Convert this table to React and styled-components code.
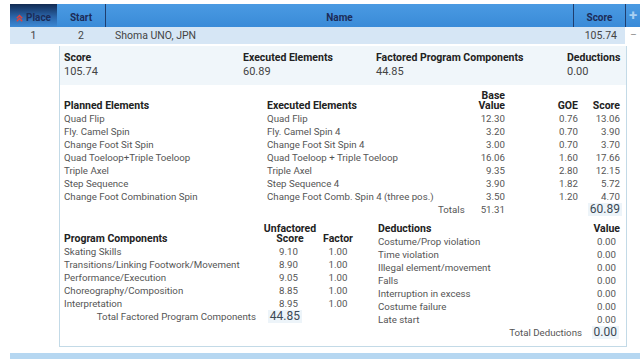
import React from "react"
import styled, { createGlobalStyle } from "styled-components"

const GlobalStyle = createGlobalStyle`
  body {
    margin: 0;
    background: #fff;
    font-family: Roboto, "Liberation Sans", sans-serif;
    color: #555;
  }
`

const summary = [
  { label: "Score", value: "105.74" },
  { label: "Executed Elements", value: "60.89" },
  { label: "Factored Program Components", value: "44.85" },
  { label: "Deductions", value: "0.00" },
]

const elements = [
  ["Quad Flip", "Quad Flip", "12.30", "0.76", "13.06"],
  ["Fly. Camel Spin", "Fly. Camel Spin 4", "3.20", "0.70", "3.90"],
  ["Change Foot Sit Spin", "Change Foot Sit Spin 4", "3.00", "0.70", "3.70"],
  ["Quad Toeloop+Triple Toeloop", "Quad Toeloop + Triple Toeloop", "16.06", "1.60", "17.66"],
  ["Triple Axel", "Triple Axel", "9.35", "2.80", "12.15"],
  ["Step Sequence", "Step Sequence 4", "3.90", "1.82", "5.72"],
  ["Change Foot Combination Spin", "Change Foot Comb. Spin 4 (three pos.)", "3.50", "1.20", "4.70"],
]

const components = [
  ["Skating Skills", "9.10", "1.00"],
  ["Transitions/Linking Footwork/Movement", "8.90", "1.00"],
  ["Performance/Execution", "9.05", "1.00"],
  ["Choreography/Composition", "8.85", "1.00"],
  ["Interpretation", "8.95", "1.00"],
]

const deductions = [
  "Costume/Prop violation",
  "Time violation",
  "Illegal element/movement",
  "Falls",
  "Interruption in excess",
  "Costume failure",
  "Late start",
]

const Page = styled.div`
  padding: 4px 0 0 10px;
  width: 630px;
`

const cols = "47px 48px 1fr 52px 15px"

const HeadRow = styled.div`
  display: grid;
  grid-template-columns: ${cols};
  height: 23px;
  background: linear-gradient(#4a9ae2, #3a8bd8);
`

const HeadCell = styled.div`
  display: flex;
  align-items: flex-end;
  justify-content: ${(p) => p.$align || "center"};
  gap: 3px;
  padding: 0 0 4px;
  font-size: 10px;
  font-weight: 700;
  color: #1c2c58;
  border-left: ${(p) => (p.$line ? "1px solid #1f3e6e" : "none")};
  background: ${(p) =>
    p.$sorted ? "linear-gradient(#112a52, #2a64a8 55%, #3d8ad6)" : "transparent"};

  svg {
    margin-bottom: 1px;
  }
`

const Plus = styled.div`
  color: #a9d0f2;
  font-size: 15px;
  font-weight: 700;
  line-height: 23px;
  padding-left: 3px;
  border-left: 1px solid #1f3e6e;
`

const DataRow = styled.div`
  display: grid;
  grid-template-columns: ${cols};
  height: 17px;
  align-items: center;
  background: #d6e6f5;
  font-size: 10.5px;
  color: #444;
`

const Cell = styled.div`
  text-align: ${(p) => p.$align || "left"};
  padding: ${(p) => p.$pad || "0"};
`

const Minus = styled.div`
  color: #999;
  font-size: 12px;
  padding-left: 5px;
  background: #fff;
  height: 100%;
  line-height: 16px;
`

const Panel = styled.div`
  margin: 2px 0 0 49px;
  width: 566px;
  border: 1px solid #c3dae7;
  border-top: none;
  padding-bottom: 7px;
  font-size: 9.7px;
`

const Summary = styled.div`
  display: grid;
  grid-template-columns: 179px 133px 191px auto;
  padding: 6px 0 6px 4px;
  background: #f0f6fa;
`

const SumLabel = styled.div`
  font-weight: 700;
  font-size: 10.5px;
  color: #222;
  line-height: 12px;
`

const SumValue = styled.div`
  font-size: 11px;
  color: #444;
  line-height: 15px;
`

const ElemGrid = styled.div`
  display: grid;
  grid-template-columns: 203px 174px 64px 73px 42px;
  padding: 6px 6px 0 4px;
  line-height: 13px;
`

const Th = styled.div`
  font-weight: 700;
  font-size: 10.5px;
  color: #222;
  line-height: 10px;
  align-self: end;
  padding-bottom: 1px;
  text-align: ${(p) => p.$align || "left"};
`

const Td = styled.div`
  color: #555;
  white-space: nowrap;
  text-align: ${(p) => p.$align || "left"};
  padding-right: ${(p) => p.$pr || 0}px;
`

const TotalCell = styled.div`
  grid-column: ${(p) => p.$span};
  display: flex;
  justify-content: flex-end;
  align-items: center;
  gap: 16px;
  padding-right: ${(p) => p.$pr || 0}px;
  color: #555;
`

const Big = styled.div`
  font-size: 12px;
  color: #3a4954;
  background: #edf4f9;
  padding: 0 2px;
  line-height: 13px;
  justify-self: end;
  text-align: right;
  margin-right: ${(p) => p.$mr || 0}px;
`

const Lower = styled.div`
  display: flex;
  padding: 8px 6px 0 4px;
`

const CompGrid = styled.div`
  display: grid;
  grid-template-columns: 198px 56px 40px;
  line-height: 13px;
  align-content: start;
`

const DedGrid = styled.div`
  display: grid;
  grid-template-columns: 1fr 38px;
  margin-left: 20px;
  flex: 1;
  line-height: 13px;
  align-content: start;
`

const Strip = styled.div`
  height: 6px;
  margin-top: 6px;
  background: #b6d7f1;
`

const SortIcon = () => (
  <svg width="7" height="8" viewBox="0 0 7 8">
    <path d="M0.8 4.2 L3.5 1.5 L6.2 4.2" fill="none" stroke="#e0443c" strokeWidth="1.5" />
    <path d="M0.8 7.2 L3.5 4.5 L6.2 7.2" fill="none" stroke="#e0443c" strokeWidth="1.5" />
  </svg>
)

export default function App() {
  return (
    <Page>
      <GlobalStyle />
      <HeadRow>
        <HeadCell $sorted>
          <SortIcon />
          Place
        </HeadCell>
        <HeadCell>Start</HeadCell>
        <HeadCell $line>Name</HeadCell>
        <HeadCell $line>Score</HeadCell>
        <Plus>+</Plus>
      </HeadRow>
      <DataRow>
        <Cell $align="center">1</Cell>
        <Cell $align="center">2</Cell>
        <Cell $pad="0 0 0 10px">Shoma UNO, JPN</Cell>
        <Cell $align="right" $pad="0 8px 0 0">105.74</Cell>
        <Minus>−</Minus>
      </DataRow>

      <Panel>
        <Summary>
          {summary.map((s) => (
            <div key={s.label}>
              <SumLabel>{s.label}</SumLabel>
              <SumValue>{s.value}</SumValue>
            </div>
          ))}
        </Summary>

        <ElemGrid>
          <Th>Planned Elements</Th>
          <Th>Executed Elements</Th>
          <Th $align="right">
            Base
            <br />
            Value
          </Th>
          <Th $align="right">GOE</Th>
          <Th $align="right">Score</Th>
          {elements.map((r) => (
            <React.Fragment key={r[0]}>
              <Td>{r[0]}</Td>
              <Td>{r[1]}</Td>
              <Td $align="right">{r[2]}</Td>
              <Td $align="right">{r[3]}</Td>
              <Td $align="right">{r[4]}</Td>
            </React.Fragment>
          ))}
          <TotalCell $span="1 / 4">
            <span>Totals</span>
            <span>51.31</span>
          </TotalCell>
          <div />
          <Big $mr={-2}>60.89</Big>
        </ElemGrid>

        <Lower>
          <CompGrid>
            <Th>Program Components</Th>
            <Th $align="center">
              Unfactored
              <br />
              Score
            </Th>
            <Th $align="center">Factor</Th>
            {components.map((c) => (
              <React.Fragment key={c[0]}>
                <Td>{c[0]}</Td>
                <Td $align="right" $pr={20}>{c[1]}</Td>
                <Td $align="center">{c[2]}</Td>
              </React.Fragment>
            ))}
            <TotalCell $span="1 / 2" $pr={6}>
              <span>Total Factored Program Components</span>
            </TotalCell>
            <Big $mr={16}>44.85</Big>
          </CompGrid>

          <DedGrid>
            <Th>Deductions</Th>
            <Th $align="right">Value</Th>
            {deductions.map((d) => (
              <React.Fragment key={d}>
                <Td>{d}</Td>
                <Td $align="right" $pr={4}>0.00</Td>
              </React.Fragment>
            ))}
            <TotalCell $span="1 / 2" $pr={0}>
              <span>Total Deductions</span>
            </TotalCell>
            <Big $mr={1}>0.00</Big>
          </DedGrid>
        </Lower>
      </Panel>
      <Strip />
    </Page>
  )
}
